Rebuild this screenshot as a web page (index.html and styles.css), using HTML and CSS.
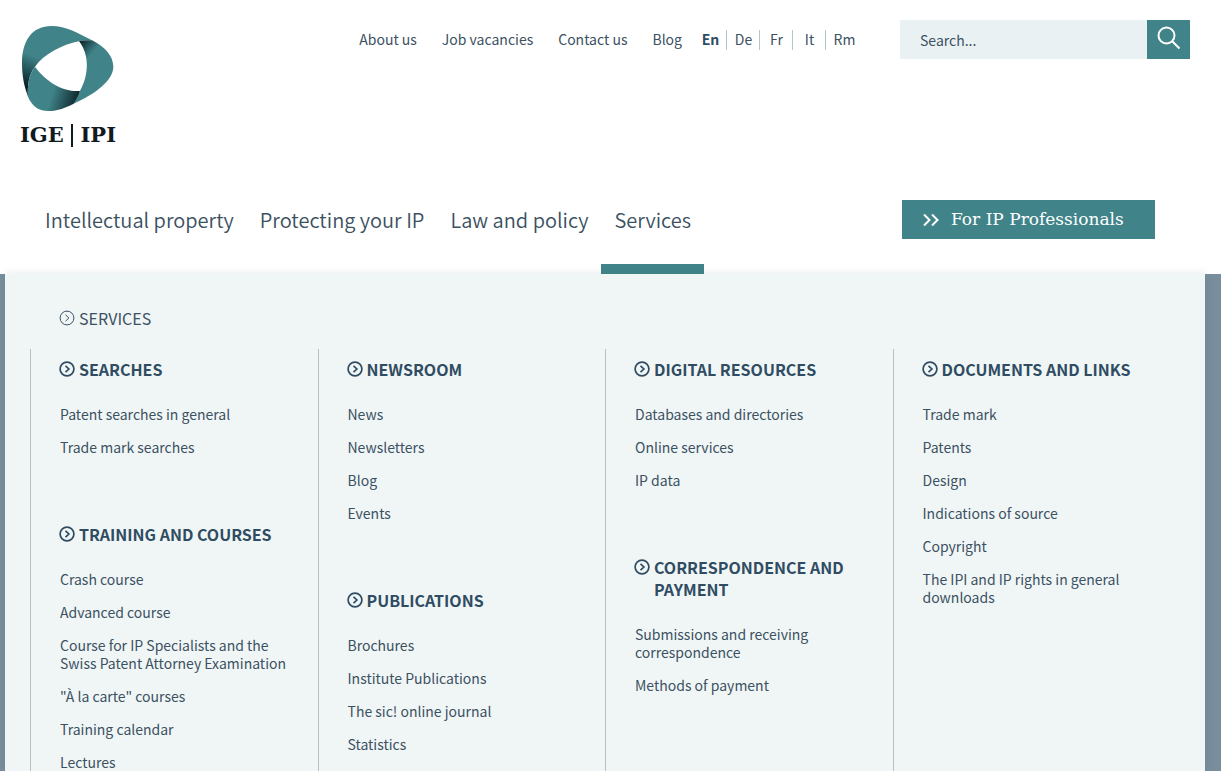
FILE: index.html
```html
<!DOCTYPE html>
<html lang="en">
<head>
  <meta charset="UTF-8">
  <meta name="viewport" content="width=device-width, initial-scale=1">
  <title>Services - IGE | IPI</title>
  <link rel="stylesheet" href="styles.css">
</head>
<body>
  <!-- circled arrow used in the menu headings -->
  <svg class="sprite" aria-hidden="true">
    <symbol id="arrow" viewBox="0 0 16 16">
      <circle cx="8" cy="8" r="6.9" />
      <path d="M6.5 4.8 L9.9 8 L6.5 11.2" />
    </symbol>
  </svg>

  <header class="header">
    <div class="topbar">
      <a class="logo" href="#">
        <svg class="logo-mark" viewBox="60 45 285 261" aria-hidden="true">
          <defs>
            <linearGradient id="fold-left" gradientUnits="userSpaceOnUse" x1="70" y1="225" x2="104" y2="138">
              <stop offset="0" stop-color="#0b2125" />
              <stop offset="0.35" stop-color="#1b464b" />
              <stop offset="1" stop-color="#40848a" />
            </linearGradient>
            <linearGradient id="fold-right" gradientUnits="userSpaceOnUse" x1="240" y1="92" x2="280" y2="126">
              <stop offset="0" stop-color="#0b2125" />
              <stop offset="1" stop-color="#40848a" />
            </linearGradient>
            <linearGradient id="fold-bottom" gradientUnits="userSpaceOnUse" x1="240" y1="268" x2="158" y2="243">
              <stop offset="0" stop-color="#0b2125" />
              <stop offset="1" stop-color="#40848a" />
            </linearGradient>
          </defs>
          <path fill="url(#fold-left)" d="M84 260 C72 228 66 198 66 160 C66 92 96 48 155 48 C198 48 236 70 276 91 C262 91 250 92 237 94 C186 104 132 132 105 170 C86 194 82 226 84 260 Z" />
          <path fill="url(#fold-right)" d="M237 94 C250 91 263 90 276 91 C314 110 340 138 340 170 C340 210 288 251 221 281 C229 268 236 256 240 243 C270 190 266 130 237 94 Z" />
          <path fill="url(#fold-bottom)" d="M105 170 C136 212 184 246 240 243 C236 257 229 269 221 281 C198 293 172 303 146 303 C112 303 94 284 84 260 C82 226 86 194 105 170 Z" />
        </svg>
        <span class="logo-text"><span>IGE</span><span class="logo-bar"></span><span>IPI</span></span>
      </a>

      <nav class="meta-nav" aria-label="Meta">
        <a href="#">About us</a>
        <a href="#">Job vacancies</a>
        <a href="#">Contact us</a>
        <a href="#">Blog</a>
      </nav>
      <nav class="lang-nav" aria-label="Language">
        <a class="active" href="#">En</a>
        <a href="#">De</a>
        <a href="#">Fr</a>
        <a href="#">It</a>
        <a href="#">Rm</a>
      </nav>

      <form class="search">
        <input type="text" placeholder="Search..." aria-label="Search">
        <button type="submit" aria-label="Search">
          <svg viewBox="0 0 24 24" aria-hidden="true">
            <circle cx="9.5" cy="9.5" r="8" />
            <path d="M15.2 15.2 L22.5 22.5" />
          </svg>
        </button>
      </form>
    </div>

    <div class="mainbar">
      <nav class="main-nav" aria-label="Main">
        <a href="#">Intellectual property</a>
        <a href="#">Protecting your IP</a>
        <a href="#">Law and policy</a>
        <a class="active" href="#">Services</a>
      </nav>
      <a class="pro-link" href="#">
        <svg viewBox="0 0 18 14" aria-hidden="true">
          <path d="M2 1.5 L7.5 7 L2 12.5 M10 1.5 L15.5 7 L10 12.5" />
        </svg>
        <span>For IP Professionals</span>
      </a>
    </div>
  </header>

  <main class="menu">
    <a class="menu-title" href="#"><svg class="arrow"><use href="#arrow" /></svg>SERVICES</a>

    <div class="columns">
      <div class="column">
        <section>
          <h2><a href="#"><svg class="arrow"><use href="#arrow" /></svg>SEARCHES</a></h2>
          <ul>
            <li><a href="#">Patent searches in general</a></li>
            <li><a href="#">Trade mark searches</a></li>
          </ul>
        </section>
        <section>
          <h2><a href="#"><svg class="arrow"><use href="#arrow" /></svg>TRAINING AND COURSES</a></h2>
          <ul>
            <li><a href="#">Crash course</a></li>
            <li><a href="#">Advanced course</a></li>
            <li><a href="#">Course for IP Specialists and the Swiss Patent Attorney Examination</a></li>
            <li><a href="#">"À la carte" courses</a></li>
            <li><a href="#">Training calendar</a></li>
            <li><a href="#">Lectures</a></li>
          </ul>
        </section>
      </div>

      <div class="column">
        <section>
          <h2><a href="#"><svg class="arrow"><use href="#arrow" /></svg>NEWSROOM</a></h2>
          <ul>
            <li><a href="#">News</a></li>
            <li><a href="#">Newsletters</a></li>
            <li><a href="#">Blog</a></li>
            <li><a href="#">Events</a></li>
          </ul>
        </section>
        <section>
          <h2><a href="#"><svg class="arrow"><use href="#arrow" /></svg>PUBLICATIONS</a></h2>
          <ul>
            <li><a href="#">Brochures</a></li>
            <li><a href="#">Institute Publications</a></li>
            <li><a href="#">The sic! online journal</a></li>
            <li><a href="#">Statistics</a></li>
          </ul>
        </section>
      </div>

      <div class="column">
        <section>
          <h2><a href="#"><svg class="arrow"><use href="#arrow" /></svg>DIGITAL RESOURCES</a></h2>
          <ul>
            <li><a href="#">Databases and directories</a></li>
            <li><a href="#">Online services</a></li>
            <li><a href="#">IP data</a></li>
          </ul>
        </section>
        <section>
          <h2><a href="#"><svg class="arrow"><use href="#arrow" /></svg>CORRESPONDENCE AND PAYMENT</a></h2>
          <ul>
            <li><a href="#">Submissions and receiving correspondence</a></li>
            <li><a href="#">Methods of payment</a></li>
          </ul>
        </section>
      </div>

      <div class="column">
        <section>
          <h2><a href="#"><svg class="arrow"><use href="#arrow" /></svg>DOCUMENTS AND LINKS</a></h2>
          <ul>
            <li><a href="#">Trade mark</a></li>
            <li><a href="#">Patents</a></li>
            <li><a href="#">Design</a></li>
            <li><a href="#">Indications of source</a></li>
            <li><a href="#">Copyright</a></li>
            <li><a href="#">The IPI and IP rights in general downloads</a></li>
          </ul>
        </section>
      </div>
    </div>
  </main>
</body>
</html>
```
FILE: styles.css
```css
* {
  box-sizing: border-box;
}
body {
  margin: 0;
  min-height: 100vh;
  display: flex;
  flex-direction: column;
  background: #788e9c;
  color: #3c5162;
  font-family: "Noto Sans CJK SC", "Open Sans", sans-serif;
  font-size: 14px;
  line-height: 18px;
}
a {
  color: inherit;
  text-decoration: none;
}
svg {
  flex: none;
  fill: none;
  stroke: currentColor;
}
.sprite {
  position: absolute;
  width: 0;
  height: 0;
}

/* header */
.header {
  background: #fff;
}
.topbar {
  display: flex;
  align-items: flex-start;
  padding: 20px 31px 0 20px;
}
.logo {
  margin: 5px auto 0 0;
  color: #111a1e;
}
.logo-mark {
  display: block;
  width: 95px;
  height: 87px;
  stroke: none;
}
.logo-text {
  display: flex;
  justify-content: space-between;
  align-items: center;
  width: 96px;
  height: 24px;
  margin-top: 11px;
  font-family: "DejaVu Serif", serif;
  font-size: 21px;
  font-weight: bold;
}
.logo-bar {
  width: 2px;
  height: 23px;
  background: #111a1e;
}
.meta-nav {
  display: flex;
  gap: 25px;
  padding: 10px 12px 0 0;
}
.lang-nav {
  display: flex;
  margin-right: 38px;
  padding-top: 10px;
}
.lang-nav a {
  min-width: 33px;
  height: 20px;
  padding-left: 1px;
  text-align: center;
  border-right: 1px solid #b4c6ca;
}
.lang-nav a:last-child {
  min-width: 36px;
  border-right: 0;
}
.lang-nav .active {
  color: #2f4c62;
  font-weight: bold;
}
.search {
  display: flex;
  width: 290px;
  height: 39px;
}
.search input {
  flex: 1;
  min-width: 0;
  padding: 0 20px;
  border: 0;
  background: #e9f1f3;
  color: #3c5162;
  font: inherit;
}
.search input::placeholder {
  color: #3c5162;
}
.search button {
  width: 43px;
  padding: 0;
  border: 0;
  background: #40848a;
  color: #fff;
}
.search svg {
  width: 24px;
  height: 24px;
  stroke-width: 2;
}

.mainbar {
  display: flex;
  justify-content: space-between;
  align-items: flex-start;
  padding: 53px 66px 0 32px;
}
.main-nav {
  display: flex;
  font-family: "Noto Sans CJK SC DemiLight", "Noto Sans CJK SC", sans-serif;
  font-size: 20px;
  font-weight: 350;
  line-height: 40px;
}
.main-nav a {
  height: 74px;
  padding: 0 13px;
  border-bottom: 10px solid transparent;
}
.main-nav .active {
  border-bottom-color: #40848a;
}
.pro-link {
  display: flex;
  align-items: center;
  gap: 11px;
  width: 253px;
  height: 39px;
  padding: 0 20px;
  background: #40848a;
  color: #fff;
  font-family: "DejaVu Serif", serif;
  font-size: 17px;
  white-space: nowrap;
}
.pro-link span {
  padding-bottom: 2px;
}
.pro-link svg {
  width: 18px;
  height: 14px;
  stroke-width: 2;
}

/* services menu */
.menu {
  flex: 1;
  display: flex;
  flex-direction: column;
  margin: 0 16px 0 5px;
  padding: 33px 25px 0;
  background: #f0f6f6;
  box-shadow: 0 0 8px rgba(60, 81, 98, 0.15);
}
.arrow {
  width: 16px;
  height: 16px;
  margin: 3px 4px 0 0;
  stroke-width: 1;
}
.menu-title {
  display: flex;
  margin: 0 29px 20px;
  font-size: 16px;
  line-height: 22px;
}
.columns {
  flex: 1;
  display: grid;
  grid-template-columns: repeat(4, 1fr);
}
.column {
  padding: 9px 20px 0 28px;
  border-left: 1px solid #b4c1c6;
}
.column section + section {
  margin-top: 67px;
}
.column h2 {
  margin: 0 0 25px;
  color: #2f4c62;
  font-size: 16px;
  line-height: 22px;
}
.column h2 a {
  display: flex;
}
.column h2 .arrow {
  stroke-width: 1.7;
}
.column ul {
  margin: 0;
  padding: 0 0 0 1px;
  list-style: none;
}
.column li + li {
  margin-top: 15px;
}
```
